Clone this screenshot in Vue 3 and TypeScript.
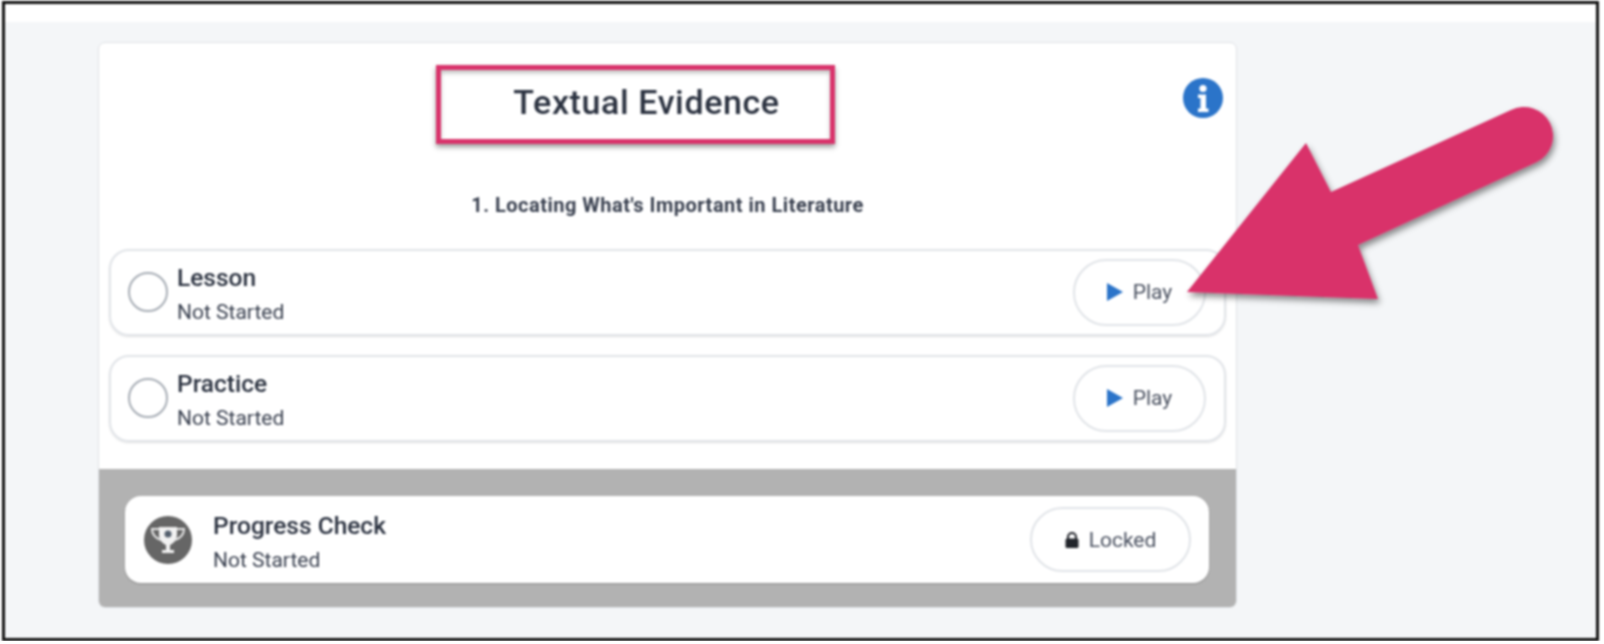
<script setup lang="ts">
const rows = [
  { id: 'lesson', title: 'Lesson' },
  { id: 'practice', title: 'Practice' },
]
</script>

<template>
  <div class="frame">
    <div class="topband"></div>
    <main class="page">
      <section class="card">
        <div class="upper">
          <header class="head">
            <h1 class="title">Textual Evidence</h1>
            <svg class="info" viewBox="0 0 40 40" aria-hidden="true">
              <circle cx="20" cy="20" r="20" fill="#2b74c9" />
              <circle cx="20" cy="10.5" r="3.6" fill="#fff" />
              <path d="M15 16.500h8v14h2.500v3.500h-10.500v-3.500h2.500v-10.500h-2.500z" fill="#fff" />
            </svg>
          </header>
          <p class="subtitle">1. Locating What's Important in Literature</p>
          <div class="rows">
            <div v-for="row in rows" :key="row.id" class="row">
              <span class="ring"></span>
              <div class="labels">
                <div class="name">{{ row.title }}</div>
                <div class="status">Not Started</div>
              </div>
              <button class="pill play" type="button">
                <svg class="tri" viewBox="0 0 16 18" aria-hidden="true"><path d="M0 0l16 9L0 18z" fill="#2b74c9" /></svg>
                Play
              </button>
            </div>
          </div>
        </div>
        <div class="lower">
          <div class="check">
            <svg class="trophy" viewBox="0 0 48 48" aria-hidden="true">
              <circle cx="24" cy="24" r="24" fill="#666" />
              <path d="M15 11h18v7c0 6-3 9-7 11v5h4v3H18v-3h4v-5c-4-2-7-5-7-11z" fill="#f2f2f2" />
              <path d="M15 13H8c0 6 3 9 9 11M33 13h7c0 6-3 9-9 11" fill="none" stroke="#e6e6e6" stroke-width="2" />
              <circle cx="24" cy="18" r="3.500" fill="#55606e" />
            </svg>
            <div class="labels wide">
              <div class="name">Progress Check</div>
              <div class="status">Not Started</div>
            </div>
            <button class="pill locked" type="button">
              <svg class="lock" viewBox="0 0 14 16" aria-hidden="true">
                <path d="M3 7V5a4 4 0 0 1 8 0v2" fill="none" stroke="#22252b" stroke-width="2" />
                <rect x="0.500" y="6.500" width="13" height="9.500" rx="1.500" fill="#22252b" />
              </svg>
              Locked
            </button>
          </div>
        </div>
      </section>
    </main>
    <svg class="arrow" viewBox="0 0 1604 644" aria-hidden="true">
      <defs>
        <filter id="arrowShadow" x="-20%" y="-20%" width="140%" height="140%">
          <feDropShadow dx="2" dy="4" stdDeviation="3" flood-color="#000" flood-opacity="0.45" />
        </filter>
      </defs>
      <path
        filter="url(#arrowShadow)"
        fill="#d9336b"
        d="M1187 292L1306 143L1331 192L1511 110A29 29 0 0 1 1537 162L1358 245L1378 299Z"
      />
    </svg>
  </div>
</template>

<style>
html, body { margin: 0; background: #fff; }
</style>

<style scoped>
.frame {
  position: relative;
  box-sizing: border-box;
  width: 1597px;
  height: 640px;
  margin: 1px 0 0 2px;
  border: 3px solid #111;
  background: #f4f6f8;
  font-family: Roboto, "Liberation Sans", sans-serif;
  color: #2b3240;
  overflow: hidden;
  filter: blur(0.8px);
}
.topband { height: 18px; background: #fff; }
.page { padding: 20px 0 0 93px; }
.card {
  box-sizing: border-box;
  width: 1139px;
  height: 566px;
  display: flex;
  flex-direction: column;
  border: 1px solid #dfe2e6;
  border-radius: 7px;
  background: #fff;
  overflow: hidden;
}
.upper { flex: 1; padding: 0 10px 0 10px; }
.head { position: relative; height: 127px; display: flex; justify-content: center; }
.title {
  box-sizing: border-box;
  width: 399px;
  height: 79px;
  margin: 22px 0 0 -64px;
  padding-left: 22px;
  border: 5px solid #d9336b;
  box-shadow: 0 3px 5px rgba(0, 0, 0, 0.4), inset 0 3px 4px rgba(0, 0, 0, 0.25);
  font-size: 34px;
  font-weight: 500;
  letter-spacing: 0.6px;
  line-height: 64px;
  text-align: center;
}
.info { position: absolute; right: 3px; top: 35px; width: 40px; height: 40px; }
.subtitle { margin: 24px 0 0 0; font-size: 20px; font-weight: 700; letter-spacing: 0.5px; line-height: 22px; text-align: center; color: #3a4150; }
.rows { display: flex; flex-direction: column; gap: 19px; margin-top: 33px; }
.row {
  box-sizing: border-box;
  height: 87px;
  display: flex;
  align-items: center;
  padding: 0 18px 0 17px;
  border: 2px solid #e1e4e8;
  border-radius: 20px;
  box-shadow: 0 1px 2px rgba(0, 0, 0, 0.12);
}
.ring {
  box-sizing: border-box;
  width: 40px;
  height: 40px;
  margin: 0 9px 2px 0;
  border: 2px solid #a7adb5;
  border-radius: 50%;
}
.labels { flex: 1; padding-top: 2px; }
.labels.wide { margin-left: 21px; padding-top: 4px; }
.name { font-size: 24.5px; font-weight: 500; line-height: 28px; }
.status { margin-top: 8px; font-size: 21px; line-height: 24px; color: #3a4150; }
.pill {
  box-sizing: border-box;
  display: flex;
  align-items: center;
  justify-content: center;
  border: 2px solid #e1e4e8;
  background: #fff;
  border-radius: 34px;
  font: inherit;
  font-size: 21px;
  color: #4a5160;
}
.play { width: 133px; height: 67px; gap: 10px; padding-bottom: 2px; }
.tri { width: 16px; height: 18px; }
.lower {
  box-sizing: border-box;
  height: 138px;
  padding: 27px 27px 25px 26px;
  background: #b2b2b2;
}
.check {
  box-sizing: border-box;
  height: 87px;
  display: flex;
  align-items: center;
  padding: 0 18px 0 19px;
  border-radius: 16px;
  background: #fff;
  box-shadow: 0 1px 2px rgba(0, 0, 0, 0.2);
}
.trophy { width: 48px; height: 48px; }
.locked { width: 161px; height: 65px; gap: 10px; }
.lock { width: 14px; height: 16px; }
.arrow { position: absolute; left: -5px; top: -4px; width: 1604px; height: 644px; pointer-events: none; }
</style>
